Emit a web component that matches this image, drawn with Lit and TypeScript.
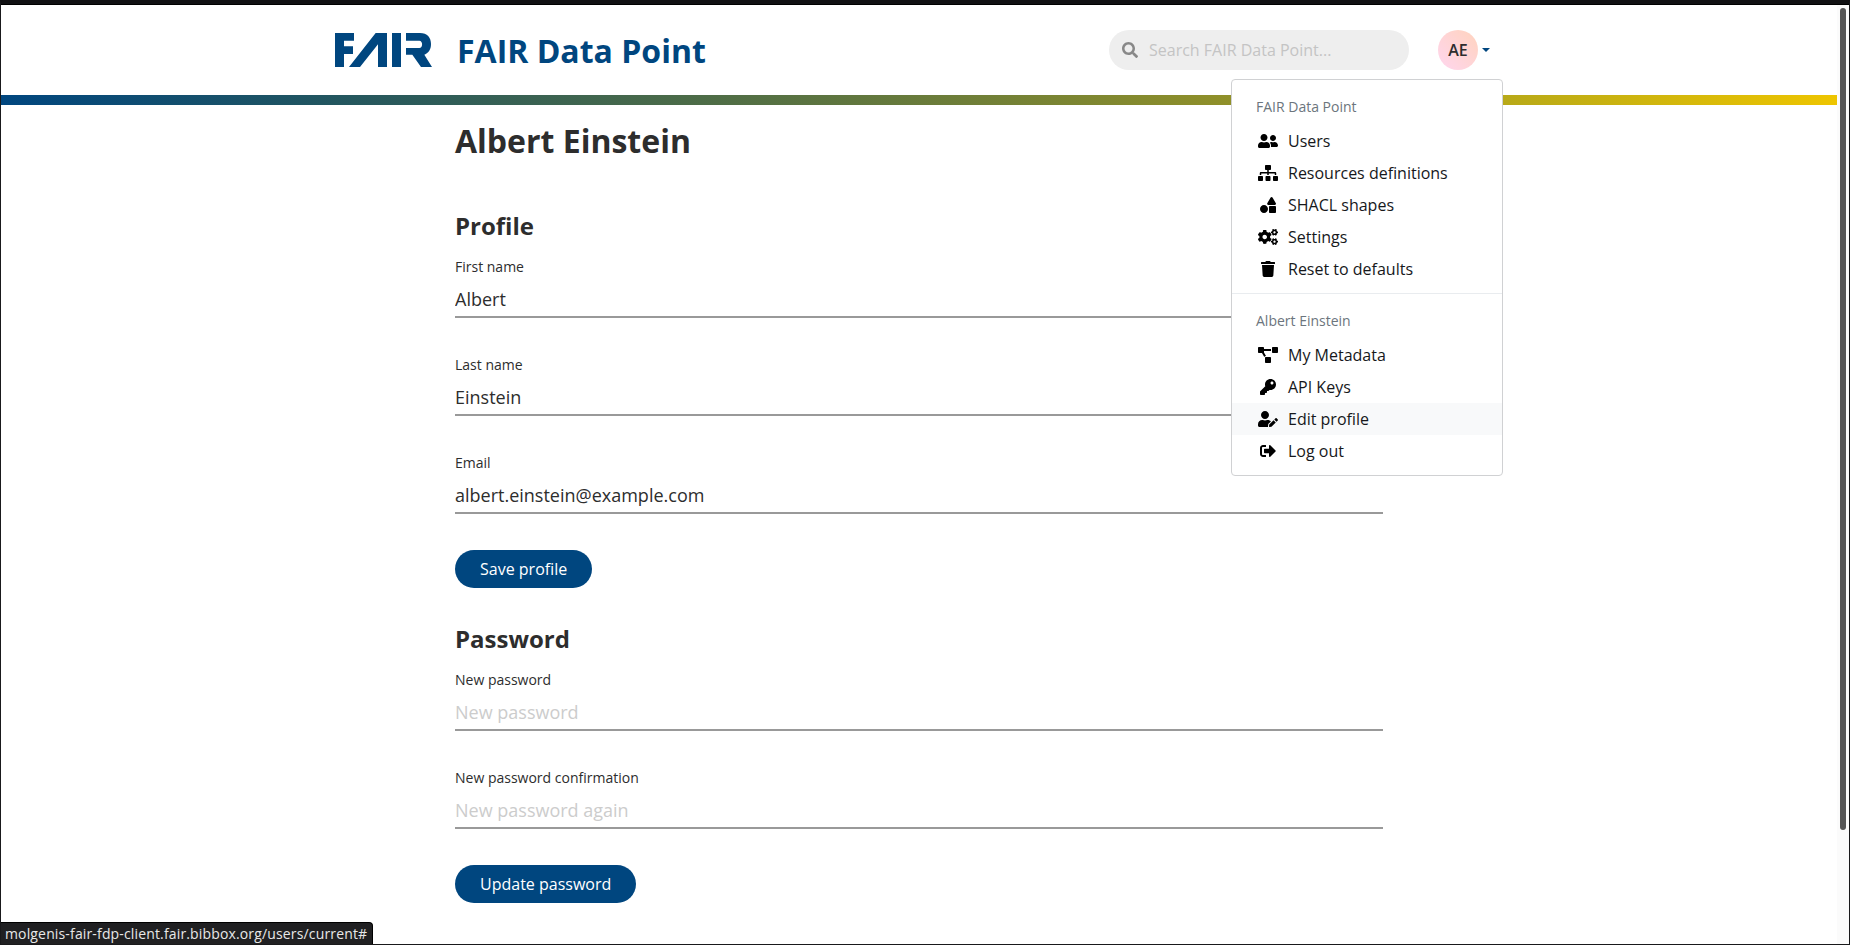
import { LitElement, html, svg, css } from "lit";
import { customElement, property } from "lit/decorators.js";

type Icon = { w: number; d: string };

const ICONS: Record<string, Icon> = {
  search: { w: 512, d: "M505 442.7L405.3 343c-4.5-4.500-10.600-7-17-7H372c27.600-35.300 44-79.700 44-128C416 93.100 322.900 0 208 0S0 93.100 0 208s93.100 208 208 208c48.300 0 92.700-16.400 128-44v16.300c0 6.400 2.500 12.500 7 17l99.700 99.700c9.400 9.400 24.600 9.400 33.900 0l28.300-28.300c9.400-9.400 9.400-24.600.1-34zM208 336c-70.700 0-128-57.200-128-128 0-70.700 57.200-128 128-128 70.700 0 128 57.200 128 128 0 70.700-57.200 128-128 128z" },
  users: { w: 640, d: "M192 256c61.900 0 112-50.100 112-112S253.900 32 192 32 80 82.100 80 144s50.100 112 112 112zm76.800 32h-8.300c-20.800 10-43.900 16-68.500 16s-47.600-6-68.500-16h-8.300C51.600 288 0 339.600 0 403.200V432c0 26.500 21.500 48 48 48h288c26.500 0 48-21.500 48-48v-28.800c0-63.600-51.600-115.200-115.200-115.200zM480 256c53 0 96-43 96-96s-43-96-96-96-96 43-96 96 43 96 96 96zm48 32h-3.800c-13.900 4.800-28.600 8-44.200 8s-30.300-3.200-44.200-8H432c-20.400 0-39.200 5.900-55.700 15.400 24.400 26.300 39.700 61.200 39.700 99.800v38.400c0 2.200-.5 4.300-.6 6.400H592c26.500 0 48-21.500 48-48 0-61.900-50.100-112-112-112z" },
  sitemap: { w: 640, d: "M128 352H32c-17.670 0-32 14.330-32 32v96c0 17.670 14.330 32 32 32h96c17.670 0 32-14.330 32-32v-96c0-17.670-14.330-32-32-32zm-24-80h192v48h48v-48h192v48h48v-57.590c0-21.170-17.230-38.410-38.410-38.410H344v-64h40c17.670 0 32-14.330 32-32V32c0-17.670-14.330-32-32-32H256c-17.670 0-32 14.330-32 32v96c0 17.670 14.330 32 32 32h40v64H94.410C73.230 224 56 241.230 56 262.410V320h48v-48zm264 80h-96c-17.670 0-32 14.330-32 32v96c0 17.670 14.330 32 32 32h96c17.670 0 32-14.330 32-32v-96c0-17.670-14.330-32-32-32zm240 0h-96c-17.670 0-32 14.330-32 32v96c0 17.670 14.330 32 32 32h96c17.670 0 32-14.330 32-32v-96c0-17.670-14.330-32-32-32z" },
  shapes: { w: 512, d: "M128 256C57.310 256 0 313.310 0 384s57.310 128 128 128 128-57.310 128-128-57.310-128-128-128zm379.030-54.860L400.100 18.290c-13.160-24.390-46.910-24.390-60.060 0L232.970 201.140c-13.160 24.380 3.710 54.860 30.020 54.860h213.980c26.330 0 43.220-30.480 30.060-54.860zM480 288H320c-17.670 0-32 14.330-32 32v160c0 17.670 14.330 32 32 32h160c17.670 0 32-14.330 32-32V320c0-17.670-14.330-32-32-32z" },
  cogs: { w: 640, d: "M512.1 191l-8.200 14.300c-3 5.300-9.400 7.500-15.100 5.400-11.800-4.400-22.600-10.700-32.100-18.600-4.600-3.800-5.800-10.500-2.800-15.700l8.200-14.300c-6.900-8-12.300-17.300-15.900-27.400h-16.500c-6 0-11.200-4.300-12.200-10.300-2-12-2.100-24.600 0-37.100 1-6 6.200-10.400 12.200-10.400h16.500c3.600-10.100 9-19.400 15.900-27.400l-8.200-14.300c-3-5.200-1.900-11.900 2.800-15.700 9.500-7.900 20.400-14.200 32.100-18.600 5.700-2.100 12.100.1 15.100 5.400l8.200 14.300c10.500-1.900 21.200-1.900 31.700 0L552 6.300c3-5.300 9.400-7.500 15.100-5.400 11.800 4.400 22.600 10.700 32.100 18.600 4.600 3.800 5.800 10.500 2.800 15.700l-8.200 14.300c6.900 8 12.300 17.300 15.900 27.400h16.500c6 0 11.200 4.300 12.200 10.300 2 12 2.100 24.600 0 37.100-1 6-6.200 10.400-12.200 10.400h-16.500c-3.600 10.100-9 19.400-15.900 27.400l8.200 14.300c3 5.200 1.900 11.900-2.800 15.700-9.500 7.900-20.400 14.200-32.100 18.600-5.700 2.100-12.100-.1-15.100-5.400l-8.200-14.300c-10.400 1.900-21.200 1.900-31.700 0zm-10.500-58.800c38.500 29.600 82.400-14.300 52.800-52.800-38.500-29.700-82.400 14.300-52.800 52.800zM386.300 286.100l33.700 16.800c10.100 5.800 14.500 18.100 10.500 29.100-8.900 24.200-26.400 46.400-42.600 65.800-7.400 8.900-20.200 11.100-30.300 5.300l-29.100-16.800c-16 13.700-34.600 24.600-54.900 31.700v33.600c0 11.600-8.300 21.600-19.700 23.600-24.600 4.200-50.400 4.400-75.900 0-11.500-2-20-11.900-20-23.600V418c-20.300-7.200-38.900-18-54.900-31.700L74 403c-10 5.800-22.900 3.600-30.300-5.300-16.200-19.400-33.300-41.600-42.200-65.700-4-10.900.4-23.200 10.500-29.100l33.300-16.800c-3.900-20.900-3.900-42.400 0-63.400L12 205.800c-10.100-5.800-14.600-18.100-10.500-29 8.900-24.200 26-46.400 42.200-65.800 7.400-8.900 20.200-11.100 30.300-5.300l29.100 16.800c16-13.700 34.600-24.600 54.900-31.700V57.100c0-11.500 8.200-21.500 19.600-23.500 24.600-4.200 50.500-4.400 76-.1 11.500 2 20 11.900 20 23.600v33.600c20.300 7.200 38.900 18 54.900 31.700l29.100-16.800c10-5.800 22.900-3.600 30.300 5.300 16.200 19.400 33.200 41.600 42.100 65.800 4 10.900.1 23.200-10 29.100l-33.700 16.800c3.900 21 3.900 42.500 0 63.500zm-117.600 21.100c59.200-77-28.700-164.900-105.700-105.700-59.200 77 28.700 164.900 105.700 105.700zm243.400 182.700l-8.200 14.300c-3 5.300-9.400 7.500-15.100 5.400-11.800-4.400-22.600-10.700-32.100-18.600-4.600-3.800-5.800-10.500-2.800-15.700l8.200-14.300c-6.900-8-12.300-17.300-15.900-27.400h-16.500c-6 0-11.200-4.300-12.200-10.300-2-12-2.100-24.600 0-37.100 1-6 6.200-10.400 12.200-10.400h16.500c3.600-10.100 9-19.400 15.900-27.400l-8.200-14.300c-3-5.200-1.900-11.900 2.800-15.700 9.500-7.900 20.400-14.200 32.100-18.600 5.700-2.100 12.100.1 15.100 5.400l8.200 14.300c10.500-1.900 21.200-1.900 31.700 0l8.200-14.300c3-5.300 9.400-7.500 15.100-5.400 11.800 4.400 22.600 10.700 32.100 18.600 4.600 3.800 5.800 10.500 2.800 15.700l-8.200 14.300c6.900 8 12.300 17.300 15.900 27.400h16.500c6 0 11.200 4.300 12.200 10.300 2 12 2.100 24.600 0 37.100-1 6-6.200 10.400-12.200 10.400h-16.500c-3.600 10.100-9 19.400-15.900 27.400l8.200 14.300c3 5.200 1.900 11.900-2.800 15.700-9.500 7.900-20.400 14.200-32.100 18.600-5.700 2.100-12.100-.1-15.100-5.400l-8.200-14.300c-10.400 1.900-21.200 1.900-31.700 0zM501.600 431c38.500 29.600 82.400-14.300 52.800-52.800-38.500-29.600-82.400 14.300-52.800 52.800z" },
  trash: { w: 448, d: "M432 32H312l-9.400-18.700A24 24 0 0 0 281.100 0H166.800a23.720 23.720 0 0 0-21.400 13.300L136 32H16A16 16 0 0 0 0 48v32a16 16 0 0 0 16 16h416a16 16 0 0 0 16-16V48a16 16 0 0 0-16-16zM53.200 467a48 48 0 0 0 47.900 45h245.800a48 48 0 0 0 47.900-45L416 128H32z" },
  diagram: { w: 640, d: "M384 320H256c-17.670 0-32 14.330-32 32v128c0 17.670 14.330 32 32 32h128c17.670 0 32-14.330 32-32V352c0-17.670-14.330-32-32-32zM192 32c0-17.670-14.330-32-32-32H32C14.330 0 0 14.330 0 32v128c0 17.670 14.330 32 32 32h95.720l73.160 128.040C211.980 300.980 232.400 288 256 288h.28L192 175.510V128h224V64H192V32zM608 0H480c-17.670 0-32 14.330-32 32v128c0 17.670 14.330 32 32 32h128c17.670 0 32-14.330 32-32V32c0-17.670-14.330-32-32-32z" },
  key: { w: 512, d: "M512 176.001C512 273.203 433.202 352 336 352c-11.220 0-22.190-1.062-32.827-3.069l-24.012 27.014A23.999 23.999 0 0 1 261.223 384H224v40c0 13.255-10.745 24-24 24h-40v40c0 13.255-10.745 24-24 24H24c-13.255 0-24-10.745-24-24v-78.059c0-6.365 2.529-12.470 7.029-16.971l161.802-161.802C163.108 213.814 160 195.271 160 176 160 78.798 238.797.001 335.999 0 433.488-.001 512 78.511 512 176.001zM336 128c0 26.510 21.490 48 48 48s48-21.490 48-48-21.490-48-48-48-48 21.490-48 48z" },
  userEdit: { w: 640, d: "M224 256c70.700 0 128-57.300 128-128S294.700 0 224 0 96 57.300 96 128s57.300 128 128 128zm89.600 32h-16.700c-22.200 10.200-46.900 16-72.900 16s-50.600-5.800-72.900-16h-16.700C60.200 288 0 348.200 0 422.400V464c0 26.500 21.500 48 48 48h274.900c-2.400-6.800-3.400-14-2.600-21.300l6.800-60.900 1.200-11.100 7.900-7.900 77.300-77.300c-24.500-27.700-60-45.500-99.900-45.500zm45.300 145.300l-6.800 61c-1.100 10.200 7.500 18.800 17.600 17.600l60.900-6.800 137.900-137.900-71.700-71.700-137.900 137.800zM633 268.900L595.100 231c-9.300-9.300-24.500-9.300-33.800 0l-37.800 37.800-4.100 4.100 71.800 71.700 41.800-41.800c9.300-9.400 9.300-24.500 0-33.900z" },
  signOut: { w: 512, d: "M497 273L329 441c-15 15-41 4.500-41-17v-96H152c-13.300 0-24-10.700-24-24v-96c0-13.300 10.700-24 24-24h136V88c0-21.400 25.900-32 41-17l168 168c9.300 9.400 9.300 24.600 0 34zM192 436v-40c0-6.600-5.400-12-12-12H96c-17.700 0-32-14.300-32-32V160c0-17.700 14.300-32 32-32h84c6.600 0 12-5.400 12-12V76c0-6.600-5.400-12-12-12H96c-53 0-96 43-96 96v192c0 53 43 96 96 96h84c6.600 0 12-5.400 12-12z" },
};

const icon = (name: string) => {
  const i = ICONS[name];
  return html`<svg class="icon" width=${i.w / 32} height="16" viewBox="0 0 ${i.w} 512">${svg`<path fill="currentColor" d=${i.d}></path>`}</svg>`;
};

@customElement("user-menu")
class UserMenu extends LitElement {
  static styles = css`
    :host { display: block; box-sizing: border-box; width: 272px; padding: 8px 0; background: #fff; border: 1px solid #d0d1d3; border-radius: 4px; }
    .head { padding: 8px 24px; font-size: 14px; line-height: 21px; color: #6c757d; }
    .item { display: flex; align-items: center; padding: 4px 24px; font-size: 16px; line-height: 24px; color: #16181b; }
    .item.active { background: #f8f9fa; }
    .slot { display: flex; justify-content: center; width: 24px; margin-right: 8px; color: #000; }
    .divider { height: 1px; margin: 8px 0; background: #e9ecef; }
  `;
  item(name: string, text: string, active = false) {
    return html`<div class="item ${active ? "active" : ""}"><span class="slot">${icon(name)}</span>${text}</div>`;
  }
  render() {
    return html`
      <div class="head">FAIR Data Point</div>
      ${this.item("users", "Users")}
      ${this.item("sitemap", "Resources definitions")}
      ${this.item("shapes", "SHACL shapes")}
      ${this.item("cogs", "Settings")}
      ${this.item("trash", "Reset to defaults")}
      <div class="divider"></div>
      <div class="head">Albert Einstein</div>
      ${this.item("diagram", "My Metadata")}
      ${this.item("key", "API Keys")}
      ${this.item("userEdit", "Edit profile", true)}
      ${this.item("signOut", "Log out")}
    `;
  }
}

@customElement("form-field")
class FormField extends LitElement {
  @property() label = "";
  @property() value = "";
  @property() placeholder = "";
  static styles = css`
    :host { display: block; margin-bottom: 36px; }
    .label { display: block; height: 21px; font-size: 14px; line-height: 21px; color: #2d2d2d; }
    .input { display: block; box-sizing: border-box; width: 100%; height: 41px; padding: 5px 0 0; margin: 0; border: 0; border-bottom: 2px solid #999; border-radius: 0; background: none; outline: none; font: 18px "Open Sans", sans-serif; color: #2d2d2d; }
    .input::placeholder { color: #ccc; opacity: 1; }
  `;
  render() {
    return html`<label class="label">${this.label}</label><input class="input" .value=${this.value} placeholder=${this.placeholder} />`;
  }
}

@customElement("app-root")
class AppRoot extends LitElement {
  static styles = css`
    :host { display: grid; grid-template-columns: 1836px 12px; box-sizing: border-box; width: 1850px; height: 945px; padding-top: 1px; border: 1px solid #19191b; border-top: 4px solid #111113; box-shadow: inset 0 1px 0 #000; background: #fff; font-family: "Open Sans", sans-serif; color: #2d2d2d; position: relative; overflow: hidden; }
    .page { overflow: hidden; }
    .bar { height: 90px; }
    .inner { position: relative; display: flex; align-items: center; width: 1168px; height: 76px; margin: 0 auto; }
    .logo { display: block; margin-top: 14px; }
    .brand { display: flex; align-items: center; flex: 1; height: 76px; }
    .title { margin: 15px 0 0 25px; font-size: 32px; font-weight: 700; line-height: 38px; color: #00467f; }
    .search { display: flex; align-items: center; box-sizing: border-box; width: 300px; height: 40px; margin-top: 14px; padding: 0 13px; border-radius: 20px; background: #eee; color: #888; }
    .query { flex: 1; min-width: 0; margin-left: 11px; padding: 0; border: 0; background: none; outline: none; font: 16px "Open Sans", sans-serif; }
    .query::placeholder { color: #c4c4c4; opacity: 1; }
    .avatar { display: flex; align-items: center; justify-content: center; width: 40px; height: 40px; margin: 14px 4px 0 29px; border-radius: 50%; background: linear-gradient(45deg, #ffd6ef, #ffd3bd); font-size: 16px; font-weight: 600; }
    .caret { margin: 13px 13px 0 0; border: 4px solid transparent; border-top: 4.500px solid #00467f; border-bottom: 0; }
    .menu { position: absolute; top: 74px; right: 0; z-index: 2; }
    .stripe { height: 10px; background: linear-gradient(to right, #00467f, #215560 17.4%, #4f6d46 39%, #909029 67%, #b8a918 82%, #eec500); }
    .content { width: 928px; margin: 0 auto; padding-top: 17px; }
    .h1 { margin: 0 0 51px; font-size: 32px; font-weight: 700; line-height: 38px; }
    .h2 { margin: 0 0 16px; font-size: 24px; font-weight: 700; line-height: 29px; }
    .btn { display: block; height: 38px; margin: 0 0 36px; padding: 0 25px; border: 0; border-radius: 19px; background: #00467f; color: #fff; font: 16px "Open Sans", sans-serif; }
    .track { padding: 3px; background: #fbfbfb; }
    .thumb { width: 6px; height: 822px; border-radius: 3px; background: #555; }
    .status { position: absolute; left: 0; bottom: 0; box-sizing: border-box; width: 372px; height: 22px; padding-left: 4px; border: 1px solid #000; border-left: 0; border-bottom: 0; border-radius: 0 4px 0 0; background: #202022; color: #e8e8e8; font-size: 14px; line-height: 22px; letter-spacing: 0.15px; white-space: nowrap; }
  `;
  render() {
    return html`
      <div class="page">
        <div class="bar"><div class="inner">
          <div class="brand">
            <svg class="logo" width="97" height="34" viewBox="0 0 291 102" fill="#00467f">
              <path d="M0 0H57V23H27V40H54V63H27V102H0Z"></path>
              <path d="M42 102L122 0H156V102H129V34L75 102Z"></path>
              <path d="M171 0H198V102H171Z"></path>
              <path d="M213 0H255C277 0 288 14 288 33C288 49 281 60 268 65L291 102H258L232 65H213V45H253C264 45 264 23 253 23H213Z"></path>
            </svg>
            <div class="title">FAIR Data Point</div>
          </div>
          <div class="search">${icon("search")}<input class="query" placeholder="Search FAIR Data Point..." /></div>
          <div class="avatar">AE</div>
          <div class="caret"></div>
          <user-menu class="menu"></user-menu>
        </div></div>
        <div class="stripe"></div>
        <main class="content">
          <h1 class="h1">Albert Einstein</h1>
          <h2 class="h2">Profile</h2>
          <form-field label="First name" value="Albert"></form-field>
          <form-field label="Last name" value="Einstein"></form-field>
          <form-field label="Email" value="albert.einstein@example.com"></form-field>
          <button class="btn">Save profile</button>
          <h2 class="h2">Password</h2>
          <form-field label="New password" placeholder="New password"></form-field>
          <form-field label="New password confirmation" placeholder="New password again"></form-field>
          <button class="btn">Update password</button>
        </main>
      </div>
      <div class="track"><div class="thumb"></div></div>
      <div class="status">molgenis-fair-fdp-client.fair.bibbox.org/users/current#</div>
    `;
  }
}
